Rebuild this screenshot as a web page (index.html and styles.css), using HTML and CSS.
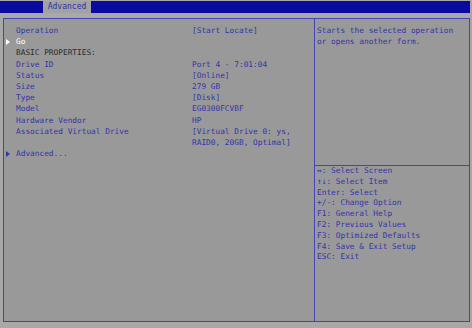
FILE: index.html
```html
<!DOCTYPE html>
<html>
<head>
<meta charset="utf-8">
<link rel="stylesheet" href="styles.css">
</head>
<body>
<div class="screen">
  <div class="topbar">
    <div class="bar-fill bar-left"></div>
    <div class="tab">Advanced</div>
    <div class="bar-fill"></div>
  </div>
  <div class="frame">
    <div class="main">
      <div class="row"><span class="mark"></span><span class="label">Operation</span><span class="value">[Start Locate]</span></div>
      <div class="row selected"><span class="mark"><i class="tri"></i></span><span class="label">Go</span><span class="value"></span></div>
      <div class="row heading"><span class="mark"></span><span class="label">BASIC PROPERTIES:</span><span class="value"></span></div>
      <div class="row"><span class="mark"></span><span class="label">Drive ID</span><span class="value">Port 4 - 7:01:04</span></div>
      <div class="row"><span class="mark"></span><span class="label">Status</span><span class="value">[Online]</span></div>
      <div class="row"><span class="mark"></span><span class="label">Size</span><span class="value">279 GB</span></div>
      <div class="row"><span class="mark"></span><span class="label">Type</span><span class="value">[Disk]</span></div>
      <div class="row"><span class="mark"></span><span class="label">Model</span><span class="value">EG0300FCVBF</span></div>
      <div class="row"><span class="mark"></span><span class="label">Hardware Vendor</span><span class="value">HP</span></div>
      <div class="row"><span class="mark"></span><span class="label">Associated Virtual Drive</span><span class="value">[Virtual Drive 0: ys,<br>RAID0, 20GB, Optimal]</span></div>
      <div class="row"><span class="mark"><i class="tri tri-blue"></i></span><span class="label">Advanced...</span><span class="value"></span></div>
    </div>
    <div class="side">
      <div class="help-top">Starts the selected operation<br>or opens another form.</div>
      <div class="help-keys">
        <div>&#8596;: Select Screen</div>
        <div>&#8593;&#8595;: Select Item</div>
        <div>Enter: Select</div>
        <div>+/-: Change Option</div>
        <div>F1: General Help</div>
        <div>F2: Previous Values</div>
        <div>F3: Optimized Defaults</div>
        <div>F4: Save &amp; Exit Setup</div>
        <div>ESC: Exit</div>
      </div>
    </div>
  </div>
</div>
</body>
</html>
```

FILE: styles.css
```css
html, body {
  margin: 0;
  padding: 0;
}
body {
  width: 472px;
  height: 328px;
  background: #a8a8a8;
  font-family: "DejaVu Sans Mono", "Liberation Mono", monospace;
  font-size: 7.8px;
  color: #3434aa;
  overflow: hidden;
}
.screen {
  display: flex;
  flex-direction: column;
  height: 328px;
}
.topbar {
  display: flex;
  height: 12px;
  margin-top: 1px;
  margin-right: 2px;
}
.bar-fill {
  flex: 1;
  background: #0a0aa0;
}
.bar-left {
  flex: 0 0 43px;
}
.tab {
  width: 48px;
  background: #a2a2a2;
  color: #3030a8;
  text-align: center;
  line-height: 12px;
  font-size: 8px;
}
.frame {
  margin: 5px 2px 0 3px;
  height: 304px;
  border: 1px solid #4444b4;
  background: #999999;
  display: grid;
  grid-template-columns: 311px 1fr;
  box-sizing: border-box;
}
.main {
  padding: 6px 0 0 2px;
  border-right: 1px solid #4444b4;
}
.row {
  display: grid;
  grid-template-columns: 10px 176px 1fr;
  line-height: 11.2px;
  white-space: nowrap;
}
.mark {
  display: flex;
  align-items: center;
  height: 11.2px;
}
.tri {
  display: block;
  width: 0;
  height: 0;
  border-left: 4px solid #ffffff;
  border-top: 3px solid transparent;
  border-bottom: 3px solid transparent;
}
.tri-blue {
  border-left-color: #3434aa;
}
.selected .label {
  color: #ffffff;
}
.heading .label {
  color: #2a2a2a;
}
.side {
  display: flex;
  flex-direction: column;
}
.help-top {
  height: 147px;
  box-sizing: border-box;
  padding: 6px 0 0 2px;
  line-height: 11px;
  border-bottom: 1px solid #4444b4;
}
.help-keys {
  padding: 0 0 0 2px;
  line-height: 10.8px;
}
```
